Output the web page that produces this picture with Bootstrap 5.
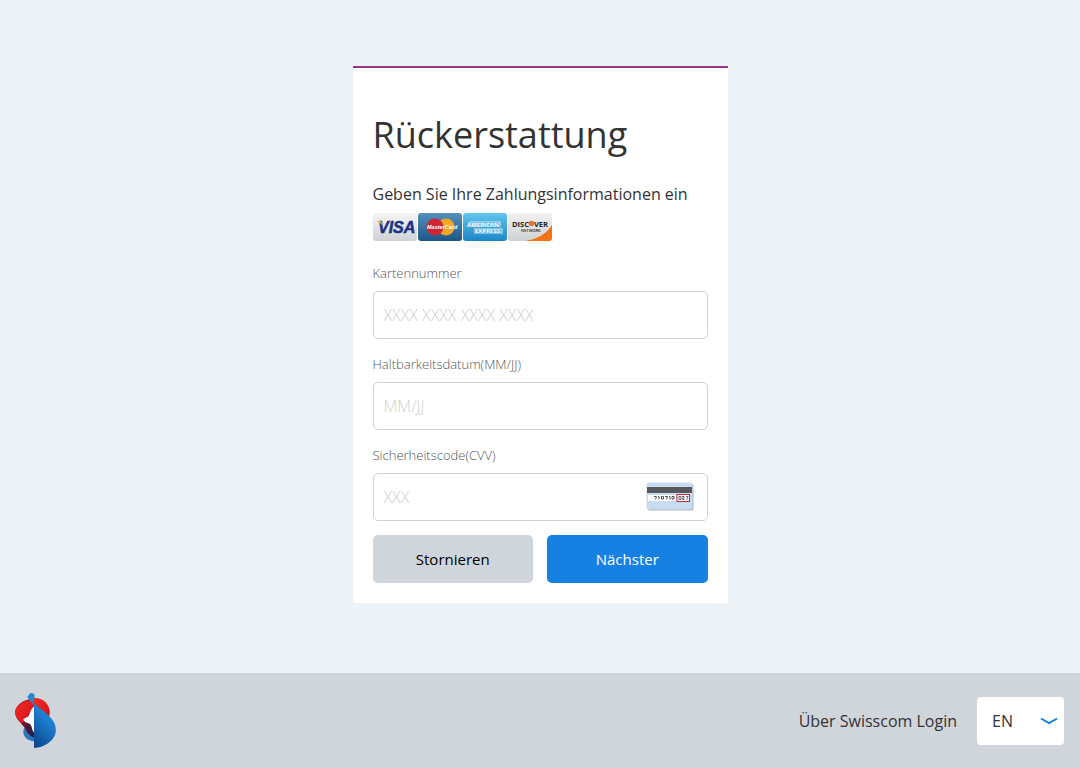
<!DOCTYPE html>
<html lang="de">
<head>
<meta charset="utf-8">
<meta name="viewport" content="width=device-width, initial-scale=1">
<title>Rückerstattung</title>
<link href="https://cdn.jsdelivr.net/npm/bootstrap@5.3.0/dist/css/bootstrap.min.css" rel="stylesheet">
<style>
  body { background: #ecf2f5; color: #333; font-family: "Open Sans", sans-serif; font-size: 16px; line-height: 24px; }
  main { padding: 66px 12px; }
  .pay-card { max-width: 375px; border-top: 2px solid #9c3587; padding: 43px 20px 20px; }
  .pay-title { font-size: 36px; line-height: 48px; font-weight: 400; margin-bottom: 23px; }
  .pay-intro { margin-bottom: 7px; }
  .brands { gap: 1px; margin-bottom: 22px; }
  .fields { display: grid; gap: 15px; margin-bottom: 14px; }
  .fields .form-label { display: block; font-size: 13px; line-height: 20px; font-weight: 300; color: #555; margin-bottom: 8px; }
  .fields .form-control { height: 48px; padding: 0 10px; border: 1px solid #d1d1d1; border-radius: 5px; font-size: 16px; font-weight: 300; color: #333; }
  .fields .form-control::placeholder { color: #d0d0d0; }
  .cvv-hint { right: 14px; top: 9px; }
  .actions { gap: 14px; }
  .actions .btn { flex: 1 1 0; height: 48px; border: 0; border-radius: 5px; font-size: 15px; }
  .btn-cancel, .btn-cancel:hover { background: #d0d5db; color: #000; }
  .btn-next, .btn-next:hover { background: #1781e3; color: #fff; }
  .site-footer { background: #d0d5dc; padding: 16px 16px 16px 15px; min-height: 95px; }
  .about { color: #333; }
  .lang-area { gap: 20px; }
  .site-footer .form-select {
    width: 87px; height: 48px; padding: 0 30px 0 15px; border: 0; border-radius: 4px; color: #333; font-size: 16px; background-color: #fff;
    background-image: url("data:image/svg+xml,%3Csvg xmlns='http://www.w3.org/2000/svg' viewBox='0 0 18 8'%3E%3Cpath d='M1 1.5L9 6L17 1.5' fill='none' stroke='%231781e3' stroke-width='2'/%3E%3C/svg%3E");
    background-size: 18px 8px; background-position: right 6px center;
  }
</style>
</head>
<body class="d-flex flex-column min-vh-100">
<main class="flex-grow-1">
  <form class="pay-card bg-white mx-auto">
    <h1 class="pay-title">Rückerstattung</h1>
    <p class="pay-intro">Geben Sie Ihre Zahlungsinformationen ein</p>
    <div class="brands d-flex">
      <svg width="44" height="28" viewBox="0 0 44 28" role="img" aria-label="Visa">
        <defs><linearGradient id="visaBg" x1="0" y1="0" x2="0" y2="1"><stop offset="0" stop-color="#f5f5f5"/><stop offset="1" stop-color="#cfd1d4"/></linearGradient></defs>
        <rect width="44" height="28" rx="3" fill="url(#visaBg)"/>
        <text x="5" y="20" font-family="Liberation Sans, sans-serif" font-size="16" font-weight="700" font-style="italic" fill="#1b3187" stroke="#1b3187" stroke-width=".5">VISA</text>
        <path d="M4 8h4l2 5-2-2z" fill="#e5a32b"/>
      </svg>
      <svg width="44" height="28" viewBox="0 0 44 28" role="img" aria-label="MasterCard">
        <defs><linearGradient id="mcBg" x1="0" y1="0" x2="0" y2="1"><stop offset="0" stop-color="#5591bd"/><stop offset="1" stop-color="#1c5587"/></linearGradient></defs>
        <rect width="44" height="28" rx="3" fill="url(#mcBg)"/>
        <circle cx="28" cy="14" r="8.500" fill="#f6a623"/>
        <circle cx="17" cy="14" r="8.500" fill="#cf2530"/>
        <text x="9" y="16" font-family="Liberation Sans, sans-serif" font-size="5.500" font-weight="700" font-style="italic" fill="#fff">MasterCard</text>
      </svg>
      <svg width="44" height="28" viewBox="0 0 44 28" role="img" aria-label="American Express">
        <defs><linearGradient id="amexBg" x1="0" y1="0" x2="0" y2="1"><stop offset="0" stop-color="#62c6ee"/><stop offset="1" stop-color="#1c86c6"/></linearGradient></defs>
        <rect width="44" height="28" rx="3" fill="url(#amexBg)"/>
        <path d="M6 8h32v6H4zM11 15h29v6H11z" fill="#a9dcf3" opacity=".7"/>
        <text x="4" y="13.500" font-family="Open Sans, sans-serif" font-size="6" font-weight="700" fill="#fff" stroke="#3da5d9" stroke-width=".6" paint-order="stroke">AMERICAN</text>
        <text x="12" y="20" font-family="Open Sans, sans-serif" font-size="6" font-weight="700" fill="#fff" stroke="#2a91cd" stroke-width=".6" paint-order="stroke">EXPRESS</text>
      </svg>
      <svg width="44" height="28" viewBox="0 0 44 28" role="img" aria-label="Discover Network">
        <defs><linearGradient id="discBg" x1="0" y1="0" x2="0" y2="1"><stop offset="0" stop-color="#f2f2f2"/><stop offset="1" stop-color="#cfd1d3"/></linearGradient></defs>
        <rect width="44" height="28" rx="3" fill="url(#discBg)"/>
        <path d="M44 12v13q0 3-3 3H17Q36 25 44 12z" fill="#f47216"/>
        <circle cx="23.500" cy="10.500" r="2.800" fill="#ef7423"/>
        <g font-family="Open Sans, sans-serif" font-weight="700" fill="#222">
          <text x="4" y="13.500" font-size="7.500">DISC</text><text x="26" y="13.500" font-size="7.500">VER</text>
          <text x="13" y="19" font-size="4" font-weight="600">NETWORK</text>
        </g>
      </svg>
    </div>
    <div class="fields">
      <div>
        <label class="form-label" for="card">Kartennummer</label>
        <input class="form-control" id="card" type="text" inputmode="numeric" placeholder="XXXX XXXX XXXX XXXX">
      </div>
      <div>
        <label class="form-label" for="expiry">Haltbarkeitsdatum(MM/JJ)</label>
        <input class="form-control" id="expiry" type="text" placeholder="MM/JJ">
      </div>
      <div>
        <label class="form-label" for="cvv">Sicherheitscode(CVV)</label>
        <div class="position-relative">
          <input class="form-control" id="cvv" type="text" inputmode="numeric" placeholder="XXX">
          <svg class="cvv-hint position-absolute" width="48" height="29" viewBox="0 0 48 29" aria-hidden="true">
            <rect x="1.500" y="1.500" width="46" height="27" rx="2.500" fill="#aeb7c4"/>
            <rect x=".5" y=".5" width="46" height="27" rx="2.500" fill="#c9dbf0"/>
            <path d="M1 5h45v6H1z" fill="#57585c"/>
            <path d="M2 13h28v6H2z" fill="#fff"/>
            <path d="M8 14.500h2.500l-1 3M12 14.500h1v3M15.500 14.500h2v2.500h-2zM19 14.500h2.500l-1 3M23 14.500h1v3M26 14.500h2v2.500h-2z" fill="none" stroke="#444" stroke-width=".9"/>
            <rect x="31" y="12.500" width="12.500" height="7" fill="#fff" stroke="#c9282d"/>
            <path d="M33 14.500h2v3h-2zM36 14.500h2v1.500h-1.500v1.500h2M40 14.500h2l-1 3" fill="none" stroke="#444" stroke-width=".8"/>
          </svg>
        </div>
      </div>
    </div>
    <div class="actions d-flex">
      <button class="btn btn-cancel" type="button">Stornieren</button>
      <button class="btn btn-next" type="submit">Nächster</button>
    </div>
  </form>
</main>
<footer class="site-footer d-flex align-items-center justify-content-between">
  <svg width="41" height="55" viewBox="0 0 40 54" role="img" aria-label="Swisscom">
    <defs>
      <linearGradient id="sailBlue" x1=".8" y1="0" x2=".3" y2="1"><stop offset="0" stop-color="#2f8fd8"/><stop offset=".4" stop-color="#1c7ccd"/><stop offset="1" stop-color="#0e4a94"/></linearGradient>
      <linearGradient id="redWave" x1="0" y1="0" x2="1" y2="1"><stop offset="0" stop-color="#f02d25"/><stop offset=".7" stop-color="#e0161c"/><stop offset="1" stop-color="#a00d1b"/></linearGradient>
      <linearGradient id="maroon" x1="0" y1="0" x2="1" y2="1"><stop offset="0" stop-color="#e01d21"/><stop offset=".6" stop-color="#621331"/><stop offset="1" stop-color="#0f2350"/></linearGradient>
    </defs>
    <path d="M9 34C7 38 8 43 13 46q4 2 6 1V40z" fill="#2878bd"/>
    <path d="M19 6C9 5 0 12 0 19c0 7 6 10 10 16 2 4 4 7 9 9V34z" fill="url(#maroon)"/>
    <path d="M14 7C6 9 0 14 0 19c0 4 3 7 7 11l3-5 9-10V6z" fill="url(#redWave)"/>
    <path d="M18 5c9-1 16 6 16 14 0 3-1 6-3 7L18 13z" fill="url(#redWave)"/>
    <path d="M19 13v26c-3-2-2-7-5-9-2-1-5-1-6-4 1-2 4-1 6-5 1-3 2-6 5-8z" fill="#fff"/>
    <path d="M18.500 10C28 18 40 25 40 36c0 10-10 17-21.500 18z" fill="url(#sailBlue)"/>
    <path d="M12 4l3-4q5 0 4 4l-1 7-3-3z" fill="#2588cf"/>
  </svg>
  <div class="lang-area d-flex align-items-center">
    <a class="about text-decoration-none" href="#">Über Swisscom Login</a>
    <select class="form-select" aria-label="Sprache"><option>EN</option><option>DE</option></select>
  </div>
</footer>
<script src="https://cdn.jsdelivr.net/npm/bootstrap@5.3.0/dist/js/bootstrap.bundle.min.js"></script>
</body>
</html>
